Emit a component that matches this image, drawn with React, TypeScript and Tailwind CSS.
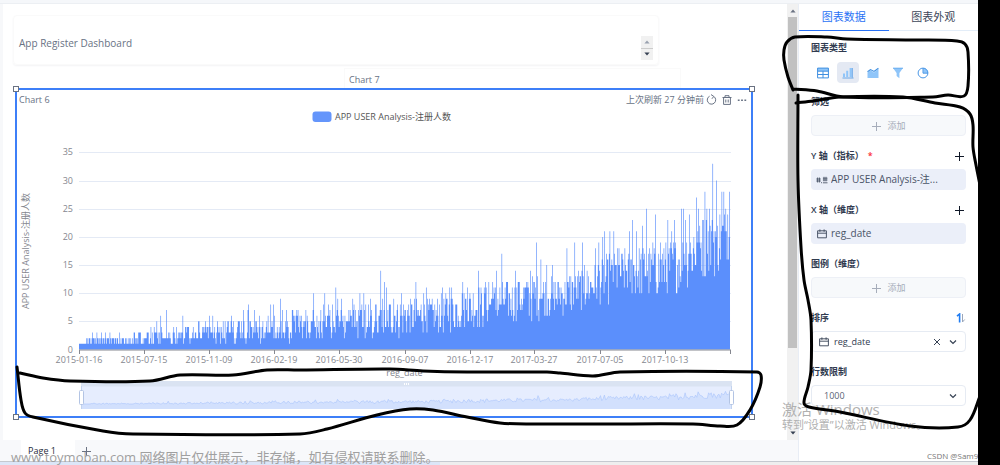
import type { ReactNode } from "react";

type Point = [number, number];

const FIRST_X = 79;
const LAST_X = 730;
const BASE_Y = 349.5;
const UNIT = 5.63;
const DAYS = 1000;

// Low and high daily registrations along the x axis
const ENVELOPE: [number, number, number][] = [
  [79, 1, 1],
  [88, 1, 2],
  [125, 0.7, 2.2],
  [140, 0.8, 3.6],
  [180, 0.8, 4],
  [210, 1, 5],
  [260, 1, 5.5],
  [300, 1.4, 6.8],
  [340, 2, 8.8],
  [400, 2, 9],
  [440, 2.6, 9.6],
  [480, 3.5, 11.5],
  [530, 5, 13],
  [560, 6, 13],
  [590, 7, 15],
  [620, 9, 18],
  [660, 9, 18.5],
  [690, 11, 21.5],
  [715, 13, 25],
  [730, 14, 26],
];

const PEAKS: Point[] = [
  [92, 3], [96, 3], [101, 3], [105, 3], [109, 3], [119, 3], [156, 5], [160, 6], [166, 7], [182, 6],
  [209, 6], [212, 6], [231, 6], [243, 7], [247, 7], [248, 8], [254, 7], [259, 6], [270, 8], [273, 8],
  [280, 9], [282, 7], [286, 7], [292, 7], [305, 7], [313, 10], [324, 10], [335, 11], [341, 9], [352, 9],
  [359, 10], [363, 10], [380, 14], [384, 12], [386, 11], [393, 9], [401, 10], [415, 12], [423, 10], [426, 11],
  [442, 11], [449, 11], [451, 11], [462, 12], [467, 11], [478, 14], [485, 12], [488, 12], [492, 12], [496, 14],
  [501, 17], [515, 14], [518, 12], [527, 12], [530, 14], [536, 19], [540, 16], [546, 15], [552, 15], [566, 18],
  [574, 19], [582, 19], [584, 15], [595, 18], [598, 19], [602, 20], [604, 21], [609, 21], [613, 21], [617, 18],
  [624, 18], [629, 21], [632, 23], [636, 21], [642, 22], [646, 25], [652, 19], [655, 24], [660, 19], [665, 19],
  [667, 23], [671, 21], [674, 23], [681, 25], [683, 25], [685, 23], [689, 24], [693, 20], [696, 27], [698, 25],
  [702, 23], [704, 28], [706, 25], [709, 25], [712, 33], [716, 30], [721, 28], [723, 28], [725, 25], [727, 24],
  [729, 28],
];

function buildSeries(): Point[] {
  let seed = 20150116;
  const random = () => {
    seed = (seed * 1103515245 + 12345) % 2147483648;
    return seed / 2147483648;
  };
  const pitch = (LAST_X - FIRST_X) / DAYS;
  const series: Point[] = [];
  for (let i = 0; i < DAYS; i++) {
    const x = FIRST_X + i * pitch;
    let k = 0;
    while (k < ENVELOPE.length - 2 && ENVELOPE[k + 1][0] < x) k++;
    const [x0, lo0, hi0] = ENVELOPE[k];
    const [x1, lo1, hi1] = ENVELOPE[k + 1];
    const t = (x - x0) / (x1 - x0);
    const lo = lo0 + (lo1 - lo0) * t;
    const hi = hi0 + (hi1 - hi0) * t;
    series.push([x, Math.max(1, Math.round(lo + (hi - lo) * Math.pow(random(), 0.85)))]);
  }
  for (const [px, value] of PEAKS) {
    const index = Math.min(DAYS - 1, Math.round((px + 0.3 - FIRST_X) / pitch));
    series[index][1] = value;
  }
  return series;
}

const SERIES = buildSeries();

const BARS = SERIES.map(
  ([x, v]) => `M${x.toFixed(2)} ${BASE_Y}v${(-v * UNIT).toFixed(2)}h0.66V${BASE_Y}z`,
).join("");

const PREVIEW = SERIES.filter((_, i) => i % 2 === 0)
  .map(([x, v], i) => `${i ? "L" : "M"}${(x + 2).toFixed(1)} ${(404.5 - v * 0.47).toFixed(1)}`)
  .join("");

const DATES: [string, number][] = [
  ["2015-01-16", 79],
  ["2015-07-15", 144],
  ["2015-11-09", 209],
  ["2016-02-19", 274],
  ["2016-05-30", 339],
  ["2016-09-07", 405],
  ["2016-12-17", 470],
  ["2017-03-27", 534],
  ["2017-07-05", 600],
  ["2017-10-13", 665],
];

function smooth(points: Point[]): string {
  let d = `M${points[0][0]} ${points[0][1]}`;
  for (let i = 0; i < points.length - 1; i++) {
    const a = points[Math.max(0, i - 1)];
    const b = points[i];
    const c = points[i + 1];
    const e = points[Math.min(points.length - 1, i + 2)];
    const near = Math.hypot(c[0] - b[0], c[1] - b[1]);
    const before = Math.hypot(c[0] - a[0], c[1] - a[1]) || 1;
    const after = Math.hypot(e[0] - b[0], e[1] - b[1]) || 1;
    const k = near / 3;
    d += `C${b[0] + ((c[0] - a[0]) / before) * k} ${b[1] + ((c[1] - a[1]) / before) * k} ${
      c[0] - ((e[0] - b[0]) / after) * k
    } ${c[1] - ((e[1] - b[1]) / after) * k} ${c[0]} ${c[1]}`;
  }
  return d;
}

const STROKES: Point[][] = [
  [[793, 90], [788, 77], [784, 60], [784, 50], [787, 42], [795, 37], [827, 37], [847, 39], [917, 40], [957, 41], [965, 44], [968, 52], [968, 86], [964, 96], [948, 95], [933, 97], [843, 97], [817, 91], [793, 89]],
  [[796, 103], [813, 101], [840, 97], [903, 97], [935, 103], [960, 107], [970, 114], [973, 125], [973, 147], [976, 165], [980, 185]],
  [[798, 95], [798, 180], [801, 247], [804, 280], [808, 300], [811, 320], [811, 370], [808, 387], [804, 403], [809, 407], [840, 412], [910, 426], [958, 427], [970, 420], [980, 396]],
  [[17, 367], [21, 400], [25, 413], [33, 417], [103, 431], [133, 434], [300, 434], [327, 429], [377, 415], [410, 409], [433, 410], [467, 417], [500, 423], [533, 424], [600, 424], [693, 424], [720, 426], [737, 425], [750, 410], [760, 387], [761, 375], [757, 372], [620, 372], [593, 376], [560, 373], [547, 372], [467, 372], [423, 371], [390, 369], [300, 370], [267, 370], [233, 375], [180, 375], [150, 381], [70, 381], [43, 378], [20, 373]],
];

function Chart() {
  return (
    <svg viewBox="17 109 734 307" className="block w-full" role="img" aria-label="APP USER Analysis">
      <rect x="312.5" y="111.5" width="19" height="10.5" rx="3" fill="#6495fb" />
      <text x="335" y="120" fontSize="9" fill="#555555">
        APP USER Analysis-注册人数
      </text>
      {[0, 5, 10, 15, 20, 25, 30, 35].map((v) => (
        <g key={v}>
          {v > 0 && (
            <path d={`M${FIRST_X} ${Math.round(BASE_Y - v * UNIT) + 0.5}H${LAST_X + 1}`} stroke="#e4eaf5" />
          )}
          <text x="73" y={BASE_Y - v * UNIT + 3} fontSize="9" textAnchor="end" fill="#85878f">
            {v}
          </text>
        </g>
      ))}
      <path d={BARS} fill="#5b8ffc" />
      <path d="M79 350H731" stroke="#85878f" />
      {DATES.map(([label, x]) => (
        <g key={label}>
          <path d={`M${x + 0.5} 350v4`} stroke="#85878f" />
          <text x={x} y="363" fontSize="9" textAnchor="middle" fill="#85878f">
            {label}
          </text>
        </g>
      ))}
      <path d="M730.5 350v4" stroke="#85878f" />
      <text x="404.5" y="376" fontSize="9" textAnchor="middle" fill="#85878f">
        reg_date
      </text>
      <text transform="translate(29 251) rotate(-90)" fontSize="9" textAnchor="middle" fill="#85878f">
        APP USER Analysis-注册人数
      </text>

      <rect x="81" y="381" width="651" height="28" fill="#e6edfe" />
      <rect x="81" y="381" width="651" height="5.5" fill="#dae3f2" />
      <path d={`${PREVIEW}V409H81z`} fill="#d2e0fd" />
      <path d={PREVIEW} fill="none" stroke="#a9c5fb" strokeWidth="0.6" />
      <path d="M81.5 386v23M731.5 386v23" stroke="#c3d3ee" />
      <path d="M404.5 383v2M406.5 383v2M408.5 383v2" stroke="#ffffff" />
      <rect x="79.5" y="390.5" width="4" height="14" rx="1" fill="#ffffff" stroke="#b3c4e4" />
      <rect x="729.5" y="390.5" width="4" height="14" rx="1" fill="#ffffff" stroke="#b3c4e4" />
    </svg>
  );
}

function Handle({ className }: { className: string }) {
  return <span className={`absolute size-[6px] border border-gray-500 bg-white ${className}`} />;
}

function Triangle({ down, className }: { down?: boolean; className: string }) {
  return (
    <svg viewBox="0 0 6 4" className={`h-1 w-1.5 fill-current ${className}`}>
      <path d={down ? "M0.4 0.4h5.2L3 3.6z" : "M0.4 3.6h5.2L3 0.4z"} />
    </svg>
  );
}

function Plus({ className }: { className: string }) {
  return (
    <svg viewBox="0 0 10 10" className={`size-2.5 ${className}`} fill="none" stroke="currentColor">
      <path d="M5.5 1v9M1 5.5h9" />
    </svg>
  );
}

function Chevron() {
  return (
    <svg viewBox="0 0 8 8" className="pointer-events-none absolute right-[9px] size-2 text-gray-700" fill="none" stroke="currentColor" strokeWidth="1.2">
      <path d="M1 2.5l3 3 3-3" />
    </svg>
  );
}

function Calendar({ className }: { className: string }) {
  return (
    <svg viewBox="0 0 10 10" className={`size-2.5 shrink-0 ${className}`} fill="none" stroke="currentColor" strokeWidth="0.9">
      <path d="M0.6 1.8h8.8v7H0.6zM0.6 4.2h8.8M2.9 0.4v2.4M7.1 0.4v2.4" />
    </svg>
  );
}

const CHART_TYPES: { name: string; icon: ReactNode }[] = [
  {
    name: "表格",
    icon: (
      <>
        <path d="M0.5 1h11v3h-11z" fill="#8fc5f9" />
        <path d="M0.6 1.1h10.8v9.8H0.6zM0.6 4.2h10.8M0.6 7.5h10.8M6 4.2v6.7" fill="none" stroke="#3f8fe0" />
      </>
    ),
  },
  {
    name: "柱状图",
    icon: (
      <>
        <path d="M1 6.5h2v3.5H1zM4.2 3.8h2V10h-2zM7.6 1h2.2v9H7.6z" fill="#8fc5f9" />
        <path d="M0.5 11h11M10.3 1v9.6" stroke="#5b9fe6" strokeWidth="0.9" />
      </>
    ),
  },
  {
    name: "面积图",
    icon: (
      <>
        <path d="M0.5 5.5l3-2.2L7 5.4l4.5-3.6V11h-11z" fill="#8fc5f9" />
        <path d="M0.5 4.8l3-2.2L7 4.4l4.4-3.2" fill="none" stroke="#3f8fe0" strokeWidth="1.1" />
      </>
    ),
  },
  {
    name: "漏斗图",
    icon: (
      <>
        <path d="M1 1h10L7.4 6v5.2L4.6 9V6z" fill="#8fc5f9" />
        <path d="M1 1.2h10" stroke="#6aaef0" />
      </>
    ),
  },
  {
    name: "饼图",
    icon: (
      <>
        <path d="M6.2 1a5 5 0 0 1 5 5h-5z" fill="#8fc5f9" />
        <circle cx="6" cy="6" r="4.9" fill="none" stroke="#4a97e6" />
        <path d="M6 1v5.2h5" fill="none" stroke="#4a97e6" />
      </>
    ),
  },
];

const FIELD = "flex h-[21px] w-full items-center rounded-sm";

function Field({ label, action, children }: { label: ReactNode; action?: ReactNode; children: ReactNode }) {
  return (
    <section className="mb-2.5">
      <div className="mb-[3px] flex h-5 items-center justify-between text-[9px] font-semibold text-[#303a4f]">
        <h3>{label}</h3>
        {action}
      </div>
      {children}
    </section>
  );
}

function AddButton() {
  return (
    <button className={`${FIELD} justify-center gap-1.5 border border-[#edf0f6] bg-[#f7f9fb] text-[9px] text-[#a6adba]`}>
      <Plus className="" />
      添加
    </button>
  );
}

function AddIcon({ name }: { name: string }) {
  return (
    <button aria-label={name} className="mr-0.5">
      <Plus className="text-gray-900" />
    </button>
  );
}

function Sidebar() {
  return (
    <aside className="flex w-[180px] shrink-0 flex-col border-l border-[#e8edf5] bg-white">
      <div className="grid h-[27px] shrink-0 grid-cols-2 border-b border-[#e3edf8] pt-1 text-[11px]">
        <button className="-mb-px border-b border-[#2a72f5] pb-1 text-[#2a72f5]">图表数据</button>
        <button className="pb-1 text-[#3c4658]">图表外观</button>
      </div>
      <div className="px-3 pt-[7px]">
        <section className="mb-[9px]">
          <h3 className="flex h-5 items-center text-[9px] font-semibold text-[#303a4f]">图表类型</h3>
          <div className="mt-1 flex gap-[3px] pl-px">
            {CHART_TYPES.map(({ name, icon }, i) => (
              <button
                key={name}
                aria-label={name}
                className={`flex h-[21px] w-[22px] items-center justify-center rounded ${i === 1 ? "bg-[#e4e9f3]" : ""}`}
              >
                <svg viewBox="0 0 12 12" className="size-3">
                  {icon}
                </svg>
              </button>
            ))}
          </div>
        </section>

        <Field label="筛选">
          <AddButton />
        </Field>
        <Field
          label={
            <>
              Y 轴（指标）<span className="ml-1 text-red-500">*</span>
            </>
          }
          action={<AddIcon name="添加指标" />}
        >
          <div className={`${FIELD} gap-[3px] bg-[#ebeff9] px-[5px] text-[10px] text-[#4a5468]`}>
            <svg viewBox="0 0 12 8" className="h-2 w-3 shrink-0" fill="none" stroke="#3b465a" strokeWidth="0.8">
              <path d="M1.6 1.5v5M3.4 1.5v5M0.3 3h4.5M0.3 5h4.5M8 0.8v4.6M10 0.8v4.6M6.9 2.2h4.6M6.9 4h4.6M6.9 6.8h4.6M5.5 6.2v1" />
            </svg>
            <span className="truncate">APP USER Analysis-注...</span>
          </div>
        </Field>
        <Field label="X 轴（维度）" action={<AddIcon name="添加维度" />}>
          <div className={`${FIELD} gap-1 bg-[#ebeff9] px-1.5 text-[10px] text-[#4a5468]`}>
            <Calendar className="text-[#3b465a]" />
            <span>reg_date</span>
          </div>
        </Field>
        <Field label="图例（维度）">
          <AddButton />
        </Field>
        <Field
          label={<label htmlFor="sort">排序</label>}
          action={
            <button aria-label="排序方向">
              <svg viewBox="0 0 10 10" className="size-2.5" fill="none">
                <path d="M1 3.2L3.6 1v8.5" stroke="#1f7cf2" strokeWidth="1.6" />
                <path d="M6.5 1v8l2.2-2.5" stroke="#9aa6ba" />
              </svg>
            </button>
          }
        >
          <div className="relative flex items-center">
            <Calendar className="pointer-events-none absolute left-2 text-gray-700" />
            <select id="sort" className={`${FIELD} appearance-none border border-[#e6ebf3] bg-white pl-[22px] text-[9px] text-[#303a4f]`}>
              <option>reg_date</option>
            </select>
            <button aria-label="清除" className="absolute right-[25px]">
              <svg viewBox="0 0 8 8" className="size-2 text-gray-700" fill="none" stroke="currentColor">
                <path d="M1 1l6 6M7 1L1 7" />
              </svg>
            </button>
            <Chevron />
          </div>
        </Field>
        <Field label={<label htmlFor="limit">行数限制</label>}>
          <div className="relative flex items-center">
            <select id="limit" className={`${FIELD} appearance-none border border-[#e6ebf3] bg-white pl-3 text-[9px] text-[#5a6375]`}>
              <option>1000</option>
            </select>
            <Chevron />
          </div>
        </Field>
      </div>
    </aside>
  );
}

function Canvas() {
  return (
    <main className="min-w-0 flex-1 border-l-[3px] border-[#f7f8fa] bg-white">
      <div className="mt-[11px] mr-32 ml-2.5 flex h-[50px] items-center justify-between rounded-sm border border-[#fafafa] px-[5px] shadow-[0_1px_2px_#f3f3f5]">
        <h1 className="pt-1.5 text-[10px] text-[#687284]">App Register Dashboard</h1>
        <div className="mt-4 flex h-6 w-3 flex-col items-center bg-[#f1f1f1]">
          <button aria-label="向上" className="flex w-full flex-1 items-center justify-center border-b border-[#cccccc]">
            <Triangle className="text-gray-400" />
          </button>
          <button aria-label="向下" className="flex w-full flex-1 items-center justify-center">
            <Triangle down className="text-gray-700" />
          </button>
        </div>
      </div>
      <div className="mt-[3px] mr-[106px] ml-[341px] flex h-5 items-center border-x border-t border-[#fafafa] pt-0.5 pl-1 text-[9px] text-[#687284]">
        Chart 7
      </div>
      <section className="relative mr-[34px] ml-3 border-2 border-[#3d7ff8]">
        <Handle className="-top-1 -left-1" />
        <Handle className="-top-1 -right-1" />
        <Handle className="-bottom-1 -left-1" />
        <Handle className="-right-1 -bottom-1" />
        <header className="flex h-[19px] items-center justify-between px-1 pl-0.5 text-[9px] text-[#687284]">
          <h2>Chart 6</h2>
          <div className="flex items-center gap-0.5">
            <span>上次刷新 27 分钟前</span>
            <button aria-label="刷新">
              <svg viewBox="0 0 11 11" className="size-[11px]" fill="none" stroke="currentColor">
                <path d="M8 2.6A4.2 4.2 0 1 1 3.6 2.2M5 0.6l2.8 1.8-1.9 2.4" />
              </svg>
            </button>
            <button aria-label="删除" className="ml-[3px]">
              <svg viewBox="0 0 10 10" className="size-2.5" fill="none" stroke="currentColor">
                <path d="M0.5 2.5h9M3 2.3V0.7h4v1.6M1.6 2.5v6.9h6.8V2.5M3.8 4.5v3M6.2 4.5v3" />
              </svg>
            </button>
            <button aria-label="更多" className="ml-[3px]">
              <svg viewBox="0 0 10 10" className="size-2.5 fill-current">
                <path d="M0.8 4.4h1.8v1.5H0.8zM4.1 4.4h1.8v1.5H4.1zM7.4 4.4h1.8v1.5H7.4z" />
              </svg>
            </button>
          </div>
        </header>
        <Chart />
      </section>
    </main>
  );
}

function ScrollBar() {
  return (
    <div className="flex w-[11px] shrink-0 flex-col items-center bg-[#f1f1f1] px-px">
      <span className="flex h-[13px] items-center">
        <Triangle className="text-gray-500" />
      </span>
      <div className="h-[331px] w-full bg-[#c1c1c1]" />
      <span className="mt-auto flex h-[15px] items-center">
        <Triangle down className="text-gray-700" />
      </span>
    </div>
  );
}

export default function App() {
  return (
    <div className="relative flex min-h-screen overflow-hidden bg-black font-['Open_Sans','Noto_Sans_CJK_SC',sans-serif]">
      <div className="relative flex min-w-0 flex-1 flex-col overflow-hidden bg-white">
        <div className="h-1 shrink-0 border-b border-[#eceff3] bg-[#f5f7fa]" />
        <div className="flex flex-1">
          <div className="flex min-w-0 flex-1 flex-col">
            <div className="flex flex-1">
              <Canvas />
              <ScrollBar />
            </div>
            <nav className="flex h-[21px] items-center bg-[#f8f9fb] pl-[21px] text-[9px]">
              <button className="h-full w-[54px] bg-white pr-3 text-gray-800">Page 1</button>
              <button aria-label="新增页面" className="ml-[6px]">
                <Plus className="text-gray-500" />
              </button>
            </nav>
          </div>
          <Sidebar />
        </div>
        <footer className="flex h-1 shrink-0 border-t border-[#c5c9d0] bg-[#eeeeee]">
          <div className="w-[45%] bg-[#dce6f8]" />
        </footer>
        <p className="absolute bottom-[3px] left-[927px] text-[8px] leading-3 whitespace-nowrap text-[#777777]">CSDN @Sam90</p>
      </div>
      <div className="w-[22px] shrink-0 bg-black" />

      <div className="pointer-events-none absolute top-[399px] left-[782px] whitespace-nowrap text-[#b0b0b0]">
        <p className="text-[15px] leading-5">激活 Windows</p>
        <p className="text-[11px] leading-3">转到“设置”以激活 Windows。</p>
      </div>
      <svg viewBox="0 0 1000 465" className="pointer-events-none absolute top-0 left-0 h-[465px] w-[1000px]" fill="none" stroke="#000000" strokeWidth="3" strokeLinecap="round" strokeLinejoin="round">
        {STROKES.map((points, i) => (
          <path key={i} d={smooth(points)} />
        ))}
      </svg>
      <p className="pointer-events-none absolute bottom-0 left-[11px] text-[13px] leading-4 whitespace-nowrap text-[#a0a0a0]">
        www.toymoban.com 网络图片仅供展示，非存储，如有侵权请联系删除。
      </p>
    </div>
  );
}
